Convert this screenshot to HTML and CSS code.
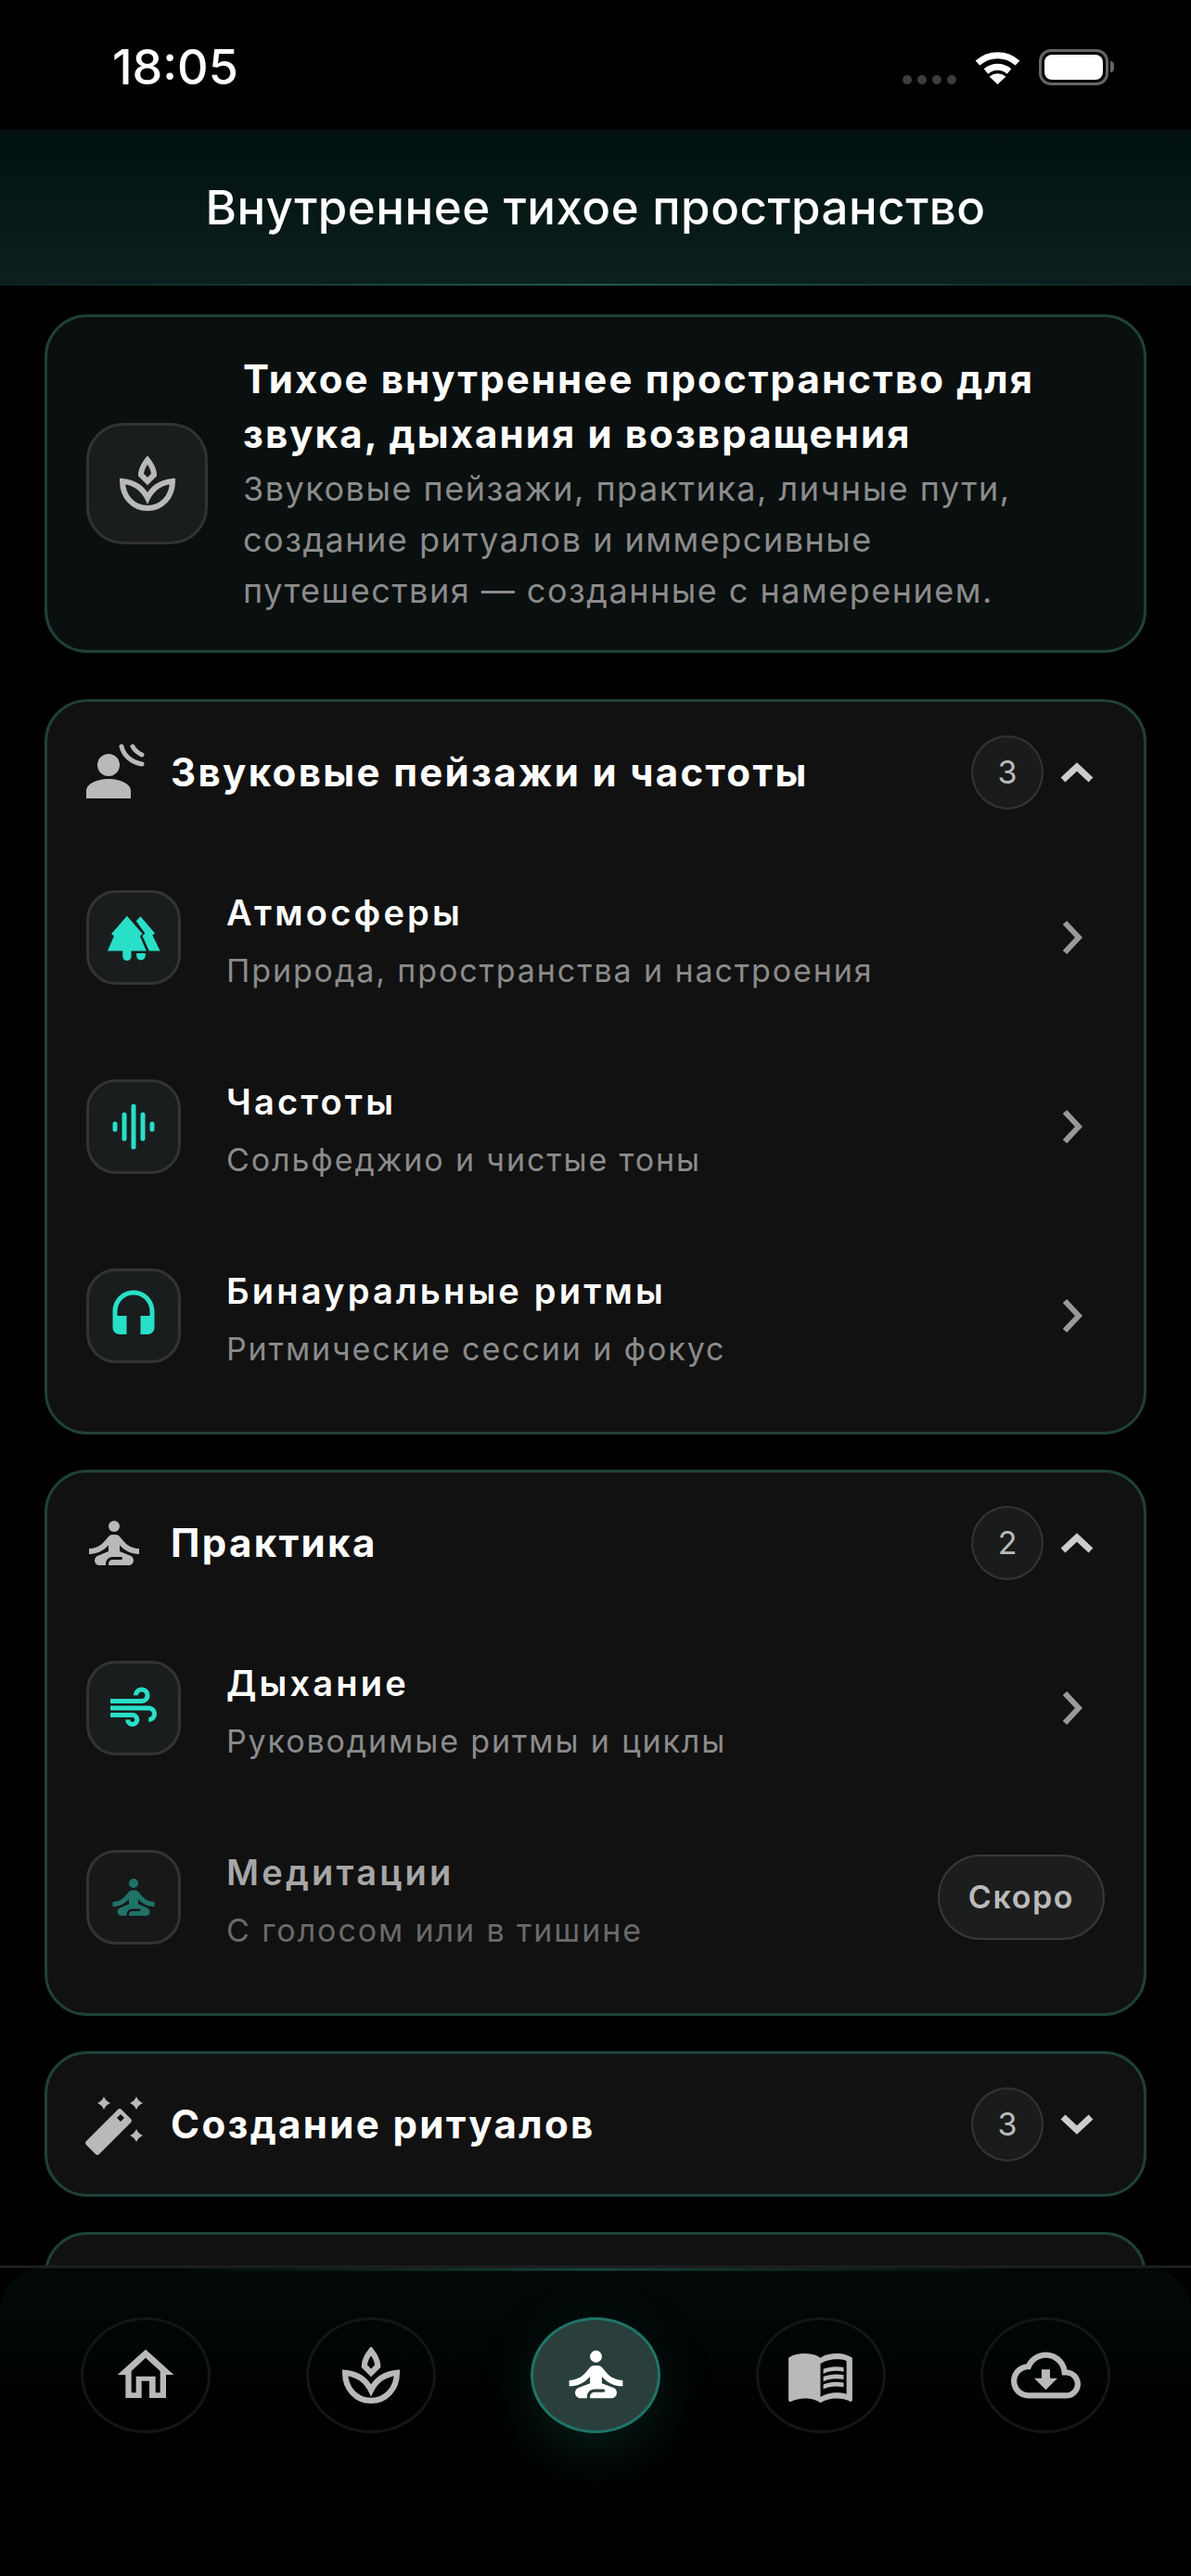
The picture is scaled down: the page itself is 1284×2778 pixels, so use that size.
FILE: index.html
```html
<!DOCTYPE html>
<html lang="ru">
<head>
    <meta charset="UTF-8">
    <meta name="viewport" content="width=device-width, initial-scale=1.0">
    <title>Внутреннее тихое пространство</title>
    <link rel="stylesheet" href="styles.css">
</head>
<body>

<div class="phone">
    <div class="status-bar">
        <span class="time">18:05</span>
        <div class="status-icons">
            <div class="signal"><i></i><i></i><i></i><i></i></div>
            <svg class="wifi" viewBox="0 0 49 37"><path d="M3 14A32 32 0 0 1 46 14M12 23A19 19 0 0 1 37 23" fill="none" stroke="#fff" stroke-width="7"/><path d="M24.5 37L15.5 28.5Q24.5 22 33.5 28.5Z" fill="#fff"/></svg>
            <div class="battery"><div class="battery-fill"></div></div>
        </div>
    </div>

    <header class="top-bar">
        <h1>Внутреннее тихое пространство</h1>
    </header>

    <main class="content">
        <section class="hero">
            <div class="tile tile-large">
                <svg class="icon-sprout" viewBox="0 0 60 60"><path d="M30 4C34 9 37 15 37 20L30 27L23 20C23 15 26 9 30 4Z M3 27C14 28 24 33 30 45C36 33 46 28 57 27C57 43 46 56 30 56C14 56 3 43 3 27Z" fill="none" stroke="#b9b9b9" stroke-width="6"/></svg>
            </div>
            <div class="hero-text">
                <h2>Тихое внутреннее пространство для звука, дыхания и возвращения</h2>
                <p>Звуковые пейзажи, практика, личные пути, создание ритуалов и иммерсивные путешествия — созданные с намерением.</p>
            </div>
        </section>

        <section class="group">
            <div class="group-head">
                <svg class="head-icon" viewBox="0 0 72 72"><circle cx="30" cy="28" r="12" fill="#b9b9b9"/><path d="M6 64V56C6 48 18 43 30 43C42 43 54 48 54 56V64Z" fill="#b9b9b9"/><path d="M44 8C46 17 54 25 66 27M56 8C58 12 62 15 66 17" fill="none" stroke="#b9b9b9" stroke-width="5" stroke-linecap="round"/></svg>
                <h3>Звуковые пейзажи и частоты</h3>
                <span class="count">3</span>
                <svg class="chev-v" viewBox="0 0 36 22"><path d="M3 19L18 5L33 19" fill="none" stroke="#ccc" stroke-width="7"/></svg>
            </div>
            <div class="row">
                <div class="tile">
                    <svg class="icon-forest" viewBox="160 645 184 160"><path d="M229 653L280 712L271 718L292 767H166L187 718L178 712Z M215 767H243V785A14 14 0 0 1 215 785Z M259 670L273 655L320 710L312 716L337 767H301L279 718L288 711Z M260 775H289V783A14.5 14.5 0 0 1 260 783Z" fill="#28dfc8"/></svg>
                </div>
                <div class="row-text">
                    <h4>Атмосферы</h4>
                    <p>Природа, пространства и настроения</p>
                </div>
                <svg class="chev-r" viewBox="0 0 22 38"><path d="M3 3L18 19L3 35" fill="none" stroke="#999" stroke-width="6"/></svg>
            </div>
            <div class="row">
                <div class="tile">
                    <svg class="icon-teal" viewBox="0 0 60 60"><path d="M10 27V33M20 17V43M30 8V52M40 17V43M50 27V33" fill="none" stroke="#28dfc8" stroke-width="5" stroke-linecap="round"/></svg>
                </div>
                <div class="row-text">
                    <h4>Частоты</h4>
                    <p>Сольфеджио и чистые тоны</p>
                </div>
                <svg class="chev-r" viewBox="0 0 22 38"><path d="M3 3L18 19L3 35" fill="none" stroke="#999" stroke-width="6"/></svg>
            </div>
            <div class="row">
                <div class="tile">
                    <svg class="icon-teal" viewBox="0 0 24 24"><path d="M12 1c-4.97 0-9 4.03-9 9v7c0 1.66 1.34 3 3 3h3v-8H5v-2c0-3.87 3.13-7 7-7s7 3.13 7 7v2h-4v8h3c1.66 0 3-1.34 3-3v-7c0-4.97-4.03-9-9-9z" fill="#28dfc8"/></svg>
                </div>
                <div class="row-text">
                    <h4>Бинауральные ритмы</h4>
                    <p>Ритмические сессии и фокус</p>
                </div>
                <svg class="chev-r" viewBox="0 0 22 38"><path d="M3 3L18 19L3 35" fill="none" stroke="#999" stroke-width="6"/></svg>
            </div>
        </section>

        <section class="group">
            <div class="group-head">
                <svg class="head-icon" viewBox="0 0 24 24" fill="#b9b9b9"><circle cx="12" cy="6" r="2"/><path d="M21,16v-2c-2.24,0-4.16-0.96-5.6-2.68l-1.34-1.6C13.68,9.26,13.12,9,12.53,9h-1.05c-0.59,0-1.15,0.26-1.53,0.72l-1.34,1.6C7.16,13.04,5.24,14,3,14v2c2.77,0,5.19-1.17,7-3.25V15l-3.88,1.55C5.45,16.82,5,17.48,5,18.21C5,19.2,5.8,20,6.79,20H9v-0.5c0-1.38,1.12-2.5,2.5-2.5h3c0.28,0,0.5,0.22,0.5,0.5S14.78,18,14.5,18h-3c-0.83,0-1.5,0.67-1.5,1.5V20h7.21C18.2,20,19,19.2,19,18.21c0-0.73-0.45-1.39-1.12-1.66L14,15v-2.25C15.81,14.83,18.23,16,21,16z"/></svg>
                <h3>Практика</h3>
                <span class="count">2</span>
                <svg class="chev-v" viewBox="0 0 36 22"><path d="M3 19L18 5L33 19" fill="none" stroke="#ccc" stroke-width="7"/></svg>
            </div>
            <div class="row">
                <div class="tile">
                    <svg class="icon-teal" viewBox="0 0 24 24"><path d="M14.5 17c0 1.65-1.35 3-3 3s-3-1.35-3-3h2c0 .55.45 1 1 1s1-.45 1-1-.45-1-1-1H2v-2h9.5c1.65 0 3 1.35 3 3zM19 6.5C19 4.57 17.43 3 15.5 3S12 4.57 12 6.5h2c0-.83.67-1.5 1.5-1.5s1.5.67 1.5 1.5S16.33 8 15.5 8H2v2h13.5c1.93 0 3.5-1.57 3.5-3.5zm-.5 4.5H2v2h16.5c.83 0 1.5.67 1.5 1.5s-.67 1.5-1.5 1.5v2c1.93 0 3.5-1.57 3.5-3.5S20.43 11 18.5 11z" fill="#28dfc8"/></svg>
                </div>
                <div class="row-text">
                    <h4>Дыхание</h4>
                    <p>Руководимые ритмы и циклы</p>
                </div>
                <svg class="chev-r" viewBox="0 0 22 38"><path d="M3 3L18 19L3 35" fill="none" stroke="#999" stroke-width="6"/></svg>
            </div>
            <div class="row row-muted">
                <div class="tile">
                    <svg class="icon-teal" viewBox="0 0 24 24" fill="#1f7367"><circle cx="12" cy="6" r="2"/><path d="M21,16v-2c-2.24,0-4.16-0.96-5.6-2.68l-1.34-1.6C13.68,9.26,13.12,9,12.53,9h-1.05c-0.59,0-1.15,0.26-1.53,0.72l-1.34,1.6C7.16,13.04,5.24,14,3,14v2c2.77,0,5.19-1.17,7-3.25V15l-3.88,1.55C5.45,16.82,5,17.48,5,18.21C5,19.2,5.8,20,6.79,20H9v-0.5c0-1.38,1.12-2.5,2.5-2.5h3c0.28,0,0.5,0.22,0.5,0.5S14.78,18,14.5,18h-3c-0.83,0-1.5,0.67-1.5,1.5V20h7.21C18.2,20,19,19.2,19,18.21c0-0.73-0.45-1.39-1.12-1.66L14,15v-2.25C15.81,14.83,18.23,16,21,16z"/></svg>
                </div>
                <div class="row-text">
                    <h4>Медитации</h4>
                    <p>С голосом или в тишине</p>
                </div>
                <span class="soon">Скоро</span>
            </div>
        </section>

        <section class="group">
            <div class="group-head">
                <svg class="head-icon" viewBox="0 0 72 72" fill="#b9b9b9"><path fill-rule="evenodd" d="M6 54L40 20Q42 18 44 20L54 30Q56 32 54 34L20 68Q18 70 16 68L6 58Q4 56 6 54ZM39 29L43 25L47 29L43 33Z"/><path d="M25 6Q27 11 32 13Q27 15 25 20Q23 15 18 13Q23 11 25 6Z M60 6Q62 11 67 13Q62 15 60 20Q58 15 53 13Q58 11 60 6Z M60 41Q62 46 67 48Q62 50 60 55Q58 50 53 48Q58 46 60 41Z"/></svg>
                <h3>Создание ритуалов</h3>
                <span class="count">3</span>
                <svg class="chev-v" viewBox="0 0 36 22"><path d="M3 3L18 17L33 3" fill="none" stroke="#ccc" stroke-width="7"/></svg>
            </div>
        </section>

        <section class="group">
            <div class="group-head"></div>
        </section>
    </main>

    <nav class="tab-bar">
        <div class="tabs">
            <div class="tab">
                <svg class="tab-home" viewBox="195 190 192 168"><path fill="#b9b9b9" fill-rule="evenodd" d="M291 195L382 277H357V352H226V277H200ZM291 222L245 265V335H260V282H323V335H338V265ZM278 297V352H303V297Z"/></svg>
            </div>
            <div class="tab">
                <svg class="tab-sprout" viewBox="0 0 60 60"><path d="M30 4C34 9 37 15 37 20L30 27L23 20C23 15 26 9 30 4Z M3 27C14 28 24 33 30 45C36 33 46 28 57 27C57 43 46 56 30 56C14 56 3 43 3 27Z" fill="none" stroke="#b9b9b9" stroke-width="6"/></svg>
            </div>
            <div class="tab tab-active">
                <svg class="tab-meditate" viewBox="0 0 24 24" fill="#fff"><circle cx="12" cy="6" r="2"/><path d="M21,16v-2c-2.24,0-4.16-0.96-5.6-2.68l-1.34-1.6C13.68,9.26,13.12,9,12.53,9h-1.05c-0.59,0-1.15,0.26-1.53,0.72l-1.34,1.6C7.16,13.04,5.24,14,3,14v2c2.77,0,5.19-1.17,7-3.25V15l-3.88,1.55C5.45,16.82,5,17.48,5,18.21C5,19.2,5.8,20,6.79,20H9v-0.5c0-1.38,1.12-2.5,2.5-2.5h3c0.28,0,0.5,0.22,0.5,0.5S14.78,18,14.5,18h-3c-0.83,0-1.5,0.67-1.5,1.5V20h7.21C18.2,20,19,19.2,19,18.21c0-0.73-0.45-1.39-1.12-1.66L14,15v-2.25C15.81,14.83,18.23,16,21,16z"/></svg>
            </div>
            <div class="tab">
                <svg class="tab-book" viewBox="0 0 24 24" fill="#b9b9b9"><path d="M21 5c-1.11-.35-2.33-.5-3.5-.5-1.95 0-4.05.4-5.5 1.5-1.45-1.1-3.55-1.5-5.5-1.5S2.45 4.9 1 6v14.65c0 .25.25.5.5.5.1 0 .15-.05.25-.05C3.1 20.45 5.05 20 6.5 20c1.95 0 4.05.4 5.5 1.5 1.35-.85 3.8-1.5 5.5-1.5 1.65 0 3.35.3 4.75 1.05.1.05.15.05.25.05.25 0 .5-.25.5-.5V6c-.6-.45-1.25-.75-2-1zm0 13.5c-1.1-.35-2.3-.5-3.5-.5-1.7 0-4.15.65-5.5 1.5V8c1.35-.85 3.8-1.5 5.5-1.5 1.2 0 2.4.15 3.5.5v11.5z"/><path d="M17.5 10.5c.88 0 1.73.09 2.5.26V9.24c-.79-.15-1.64-.24-2.5-.24-1.7 0-3.24.29-4.5.83v1.66c1.13-.64 2.7-.99 4.5-.99zM13 12.49v1.66c1.13-.64 2.7-.99 4.5-.99.88 0 1.73.09 2.5.26V11.9c-.79-.15-1.64-.24-2.5-.24-1.7 0-3.24.3-4.5.83zM17.5 14.33c-1.7 0-3.24.29-4.5.83v1.66c1.13-.64 2.7-.99 4.5-.99.88 0 1.73.09 2.5.26v-1.52c-.79-.16-1.64-.24-2.5-.24z"/></svg>
            </div>
            <div class="tab">
                <svg class="tab-cloud" viewBox="0 0 24 24" fill="#b9b9b9"><path d="M19.35 10.04C18.67 6.59 15.64 4 12 4 9.11 4 6.6 5.64 5.35 8.04 2.34 8.36 0 10.91 0 14c0 3.31 2.69 6 6 6h13c2.76 0 5-2.24 5-5 0-2.64-2.05-4.78-4.65-4.96zM19 18H6c-2.21 0-4-1.79-4-4s1.79-4 4-4h.71C7.37 7.69 9.48 6 12 6c3.04 0 5.5 2.46 5.5 5.5v.5H19c1.66 0 3 1.34 3 3s-1.34 3-3 3zm-5.55-8h-2.9v3H8l4 4 4-4h-2.55z"/></svg>
            </div>
        </div>
    </nav>
</div>

</body>
</html>
```

FILE: styles.css
```css
/* Page */
body {
    margin: 0;
    background: #000;
    color: #fff;
    font-family: 'Inter', 'Noto Sans', sans-serif;
}

h1, h2, h3, h4, p {
    margin: 0;
}

.phone {
    position: relative;
    width: 1284px;
    height: 2778px;
    overflow: hidden;
    background: #000;
}

/* Status bar */
.status-bar {
    height: 140px;
    box-sizing: border-box;
    padding: 5px 89px 0 121px;
    display: flex;
    align-items: center;
    justify-content: space-between;
}

.time {
    font-size: 52px;
    font-weight: 500;
}

.status-icons {
    display: flex;
    align-items: center;
}

.signal {
    display: flex;
    gap: 6px;
    margin-top: 27px;
    margin-right: 20px;
}

.signal i {
    width: 10px;
    height: 10px;
    border-radius: 50%;
    background: #3c3c3c;
}

.wifi {
    width: 49px;
    height: 37px;
    margin-right: 20px;
}

.battery {
    position: relative;
    width: 75px;
    height: 39px;
    box-sizing: border-box;
    border: 3px solid #666;
    border-radius: 13px;
    padding: 3px;
}

.battery::after {
    content: "";
    position: absolute;
    right: -9px;
    top: 10px;
    width: 4px;
    height: 12px;
    border-radius: 0 6px 6px 0;
    background: #666;
}

.battery-fill {
    height: 100%;
    border-radius: 8px;
    background: #fff;
}

/* Title bar */
.top-bar {
    position: relative;
    height: 168px;
    display: flex;
    align-items: center;
    justify-content: center;
    background: linear-gradient(180deg, #021110 0%, #0b201d 100%);
}

.top-bar::after {
    content: "";
    position: absolute;
    left: 0;
    right: 0;
    bottom: 0;
    height: 2px;
    background: linear-gradient(90deg, #0b201d, #1f5a50 50%, #0b201d);
}

.top-bar h1 {
    font-size: 51px;
    font-weight: 500;
    letter-spacing: 0.5px;
    margin-top: -1px;
}

/* Cards */
.content {
    padding: 31px 48px 0;
}

.hero {
    height: 365px;
    box-sizing: border-box;
    margin-bottom: 50px;
    padding: 0 80px 0 42px;
    display: flex;
    align-items: center;
    gap: 38px;
    background: #0a0f0f;
    border: 3px solid #1f4039;
    border-radius: 46px;
}

.hero-text {
    margin-top: 1px;
}

.hero-text h2 {
    font-size: 42px;
    line-height: 59px;
    font-weight: 700;
    letter-spacing: 2.1px;
}

.hero-text p {
    margin-top: 3px;
    font-size: 36px;
    line-height: 55px;
    color: #8b8b8b;
    letter-spacing: 1.5px;
}

.group {
    margin-bottom: 38px;
    padding: 0 42px;
    background: #111;
    border: 3px solid #1f4039;
    border-radius: 46px;
}

.group-head {
    height: 151px;
    display: flex;
    align-items: center;
    margin-left: -6px;
}

.head-icon {
    width: 72px;
    height: 72px;
    flex: none;
    margin-right: 25px;
}

.group-head h3 {
    flex: 1;
    font-size: 42px;
    font-weight: 700;
    letter-spacing: 2.35px;
}

.count {
    width: 78px;
    height: 80px;
    box-sizing: border-box;
    display: flex;
    align-items: center;
    justify-content: center;
    border: 2px solid #333;
    border-radius: 50%;
    background: #1a1c1c;
    color: #bbb;
    font-size: 34px;
}

.chev-v {
    width: 36px;
    height: 22px;
    margin-left: 18px;
    margin-right: 12px;
}

/* Rows */
.row {
    height: 204px;
    display: flex;
    align-items: center;
    gap: 49px;
}

.group-head + .row {
    margin-top: 1px;
}

.row:last-child {
    margin-bottom: 23px;
}

.tile {
    width: 102px;
    height: 102px;
    flex: none;
    box-sizing: border-box;
    display: flex;
    align-items: center;
    justify-content: center;
    background: #1a1d1d;
    border: 3px solid #333;
    border-radius: 32px;
}

.tile-large {
    width: 131px;
    height: 131px;
    border-radius: 40px;
}

.icon-sprout {
    width: 60px;
    height: 60px;
}

.icon-teal {
    width: 60px;
    height: 60px;
}

.icon-forest {
    width: 61px;
    height: 53px;
}

.row-text {
    flex: 1;
    margin-top: 9px;
}

.row-text h4 {
    font-size: 38px;
    line-height: 54px;
    font-weight: 600;
    letter-spacing: 3.2px;
}

.row-text p {
    margin-top: 9px;
    font-size: 34px;
    line-height: 54px;
    color: #8b8b8b;
    letter-spacing: 1.9px;
}

.chev-r {
    width: 22px;
    height: 38px;
    margin-right: 24px;
}

.row-muted .row-text h4 {
    color: #a6a6a6;
}

.row-muted .row-text p {
    color: #6a6a6a;
}

.row-muted .tile {
    background: #171919;
}

.soon {
    width: 180px;
    height: 92px;
    box-sizing: border-box;
    display: flex;
    align-items: center;
    justify-content: center;
    background: #1c1e1e;
    border: 2px solid #383838;
    border-radius: 46px;
    color: #bbb;
    font-size: 34px;
    font-weight: 600;
    letter-spacing: 1.6px;
    padding-bottom: 2px;
}

/* Bottom navigation */
.tab-bar {
    position: absolute;
    left: 0;
    right: 0;
    bottom: 0;
    height: 335px;
    box-sizing: border-box;
    background: #000;
    border-top: 3px solid #1c1e1e;
}

.tabs {
    position: relative;
    height: 100%;
    box-sizing: border-box;
    padding: 53px 87px 0;
    display: flex;
    justify-content: space-between;
    align-items: flex-start;
    border-radius: 46px 46px 0 0;
    background: linear-gradient(180deg, #020a09 0%, #000 50%);
}

.tabs::before {
    content: "";
    position: absolute;
    left: 200px;
    right: 200px;
    top: 0;
    height: 3px;
    background: linear-gradient(90deg, transparent, #17403a 50%, transparent);
}

.tab {
    width: 140px;
    height: 125px;
    box-sizing: border-box;
    display: flex;
    align-items: center;
    justify-content: center;
    border: 3px solid #141616;
    border-radius: 50%;
}

.tab-active {
    background: #2a3f3b;
    border-color: #1f7367;
    box-shadow: 0 22px 60px rgba(25, 110, 95, 0.28);
}

.tab-home {
    width: 64px;
    height: 56px;
    margin-top: -3px;
}

.tab-sprout {
    width: 62px;
    height: 62px;
}

.tab-meditate {
    width: 77px;
    height: 77px;
    margin-top: -3px;
}

.tab-book {
    width: 75px;
    height: 75px;
}

.tab-cloud {
    width: 75px;
    height: 75px;
}
```
